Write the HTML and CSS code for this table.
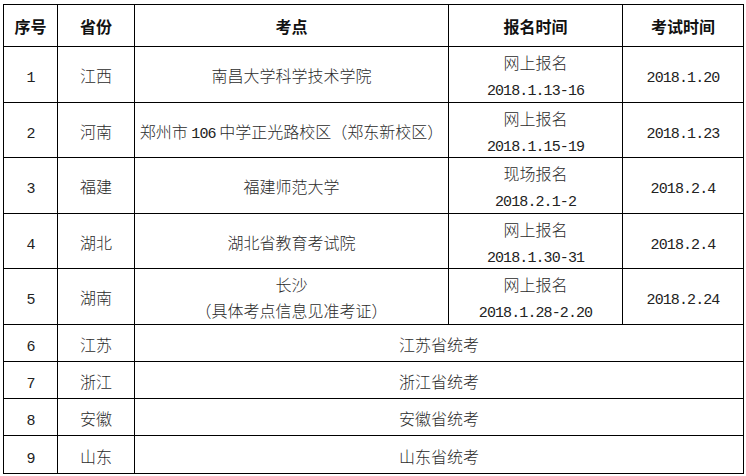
FILE: index.html
```html
<!DOCTYPE html>
<html lang="zh-CN">
<head>
<meta charset="utf-8">
<title>考点安排</title>
<link rel="stylesheet" href="styles.css">
</head>
<body>
<table class="exam">
  <colgroup>
    <col class="c-no">
    <col class="c-prov">
    <col class="c-site">
    <col class="c-reg">
    <col class="c-test">
  </colgroup>
  <thead>
    <tr class="head">
      <th>序号</th><th>省份</th><th>考点</th><th>报名时间</th><th>考试时间</th>
    </tr>
  </thead>
  <tbody>
    <tr class="tall">
      <td><span class="num">1</span></td><td>江西</td><td>南昌大学科学技术学院</td>
      <td>网上报名<br><span class="num">2018.1.13-16</span></td><td><span class="num">2018.1.20</span></td>
    </tr>
    <tr class="tall">
      <td><span class="num">2</span></td><td>河南</td><td>郑州市 <span class="num">106</span> 中学正光路校区（郑东新校区）</td>
      <td>网上报名<br><span class="num">2018.1.15-19</span></td><td><span class="num">2018.1.23</span></td>
    </tr>
    <tr class="tall">
      <td><span class="num">3</span></td><td>福建</td><td>福建师范大学</td>
      <td>现场报名<br><span class="num">2018.2.1-2</span></td><td><span class="num">2018.2.4</span></td>
    </tr>
    <tr class="tall">
      <td><span class="num">4</span></td><td>湖北</td><td>湖北省教育考试院</td>
      <td>网上报名<br><span class="num">2018.1.30-31</span></td><td><span class="num">2018.2.4</span></td>
    </tr>
    <tr class="tall">
      <td><span class="num">5</span></td><td>湖南</td><td>长沙<br>（具体考点信息见准考证）</td>
      <td>网上报名<br><span class="num">2018.1.28-2.20</span></td><td><span class="num">2018.2.24</span></td>
    </tr>
    <tr class="short">
      <td><span class="num">6</span></td><td>江苏</td><td colspan="3">江苏省统考</td>
    </tr>
    <tr class="short">
      <td><span class="num">7</span></td><td>浙江</td><td colspan="3">浙江省统考</td>
    </tr>
    <tr class="short">
      <td><span class="num">8</span></td><td>安徽</td><td colspan="3">安徽省统考</td>
    </tr>
    <tr class="short">
      <td><span class="num">9</span></td><td>山东</td><td colspan="3">山东省统考</td>
    </tr>
  </tbody>
</table>
</body>
</html>
```
FILE: styles.css
```css
html, body {
  margin: 0;
  padding: 0;
  background: #ffffff;
}

body {
  padding: 4px 0 0 3px;
  font-family: "Noto Sans CJK SC", "Noto Sans", sans-serif;
}

.exam {
  border-collapse: collapse;
  table-layout: fixed;
  width: 740px;
}

.c-no { width: 54px; }
.c-prov { width: 77px; }
.c-site { width: 314px; }
.c-reg { width: 174px; }
.c-test { width: 121px; }

.exam th,
.exam td {
  border: 1px solid #000;
  padding: 0;
  text-align: center;
  vertical-align: middle;
  font-size: 16px;
  line-height: 26px;
  color: #2b2b2b;
  white-space: nowrap;
}

.exam th {
  font-weight: 700;
  color: #111;
}

.exam td {
  font-weight: 300;
  padding-top: 2px;
}

.head th { height: 41px; }
.tall td { height: 52.5px; }
.short td { height: 34.3px; }

.num {
  font-family: "Liberation Mono", monospace;
  font-size: 15px;
  line-height: 15px;
  letter-spacing: -0.9px;
  color: #222;
}
```
